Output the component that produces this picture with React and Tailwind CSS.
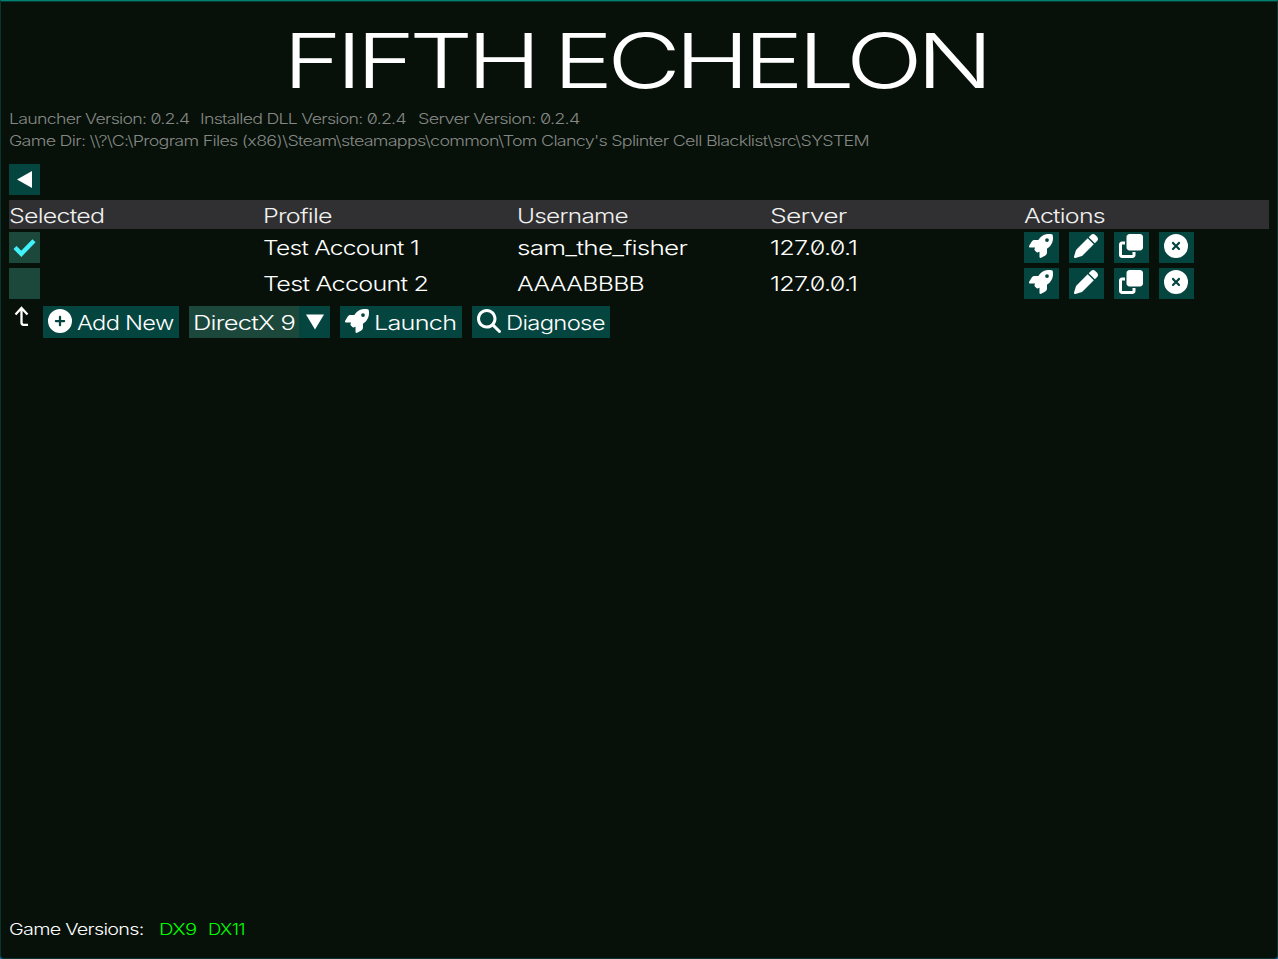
import { useLayoutEffect, useRef, useState } from "react";
import {
  FaRocket,
  FaPen,
  FaClone,
  FaCircleXmark,
  FaCirclePlus,
  FaMagnifyingGlass,
} from "react-icons/fa6";

function Wide({ w, className = "", children }) {
  const ref = useRef(null);
  const [scale, setScale] = useState(1);
  useLayoutEffect(() => {
    const fit = () => {
      if (ref.current) setScale(w / ref.current.offsetWidth);
    };
    fit();
    document.fonts?.ready.then(fit);
  }, [w]);
  return (
    <span className={`block shrink-0 text-left whitespace-pre ${className}`} style={{ width: w }}>
      <span
        ref={ref}
        className="inline-block origin-left"
        style={{ transform: `scaleX(${scale})` }}
      >
        {children}
      </span>
    </span>
  );
}

const columns = [
  ["Selected", 95],
  ["Profile", 69],
  ["Username", 111],
  ["Server", 77],
  ["Actions", 81],
];

const accounts = [
  { selected: true, name: ["Test Account 1", 156], user: ["sam_the_fisher", 170], server: ["127.0.0.1", 87] },
  { selected: false, name: ["Test Account 2", 165], user: ["AAAABBBB", 127], server: ["127.0.0.1", 87] },
];

const actions = [FaRocket, FaPen, FaClone, FaCircleXmark];

function Row({ account }) {
  return (
    <div className="grid h-[31px] grid-cols-[254px_254px_253px_254px_1fr]">
      <button className="flex size-[31px] items-center justify-center bg-[#1c483c]">
        {account.selected && (
          <svg viewBox="0 0 31 31" className="size-[31px]" fill="none" stroke="#42f2fa" strokeWidth="4.4">
            <path d="M6 15.5 L12.3 21.8 L25 8.7" />
          </svg>
        )}
      </button>
      <Wide w={account.name[1]} className="pt-px">{account.name[0]}</Wide>
      <Wide w={account.user[1]} className="pt-px">{account.user[0]}</Wide>
      <Wide w={account.server[1]} className="pt-px">{account.server[0]}</Wide>
      <div className="flex gap-2.5">
        {actions.map((Icon, i) => (
          <button key={i} className="flex h-[31px] w-[35px] items-start bg-[#05453f] pt-0.5 pl-[5px]">
            <Icon size={24} />
          </button>
        ))}
      </div>
    </div>
  );
}

function IconButton({ icon: Icon, label, w, className }) {
  return (
    <button className={`flex h-8 items-start gap-[5px] bg-[#05453f] pl-[5px] ${className}`}>
      <Icon size={24} className="mt-[3px] shrink-0" />
      <Wide w={w} className="pt-0.5">{label}</Wide>
    </button>
  );
}

export default function App() {
  return (
    <div className="h-[959px] w-[1278px] bg-[#0b6cb4]">
      <div className="flex h-full flex-col rounded-b-[4px] border border-[#08352d] border-t-[#008270] bg-[#071109] px-2 font-['Inter',sans-serif] text-[20px] leading-[30px] font-light tracking-[-0.03em] text-white shadow-[inset_0_1px_0_#043a31] [font-feature-settings:'zero']">
        <h1 className="mt-[14px] flex h-[90px] gap-[18px] pl-[274px] text-[76px] leading-[90px] font-light tracking-[-0.06em]">
          <Wide w={252}>FIFTH</Wide>
          <Wide w={434}>ECHELON</Wide>
        </h1>
        <div className="mt-[3px] flex h-[21px] gap-2.5 text-[14.5px] leading-[21px] text-[#858785]">
          <Wide w={180} className="mr-px">Launcher Version: 0.2.4</Wide>
          <Wide w={206} className="mr-0.5">Installed DLL Version: 0.2.4</Wide>
          <Wide w={161}>Server Version: 0.2.4</Wide>
        </div>
        <Wide w={860} className="h-[22px] pt-px text-[14.5px] leading-[22px] text-[#858785]">
          {"Game Dir: \\\\?\\C:\\Program Files (x86)\\Steam\\steamapps\\common\\Tom Clancy's Splinter Cell Blacklist\\src\\SYSTEM"}
        </Wide>
        <button className="mt-[13px] flex size-[31px] shrink-0 items-center justify-center bg-[#05453f]">
          <svg viewBox="0 0 31 31" className="size-[31px]" fill="white">
            <path d="M8 15.5 L23 7 V24 Z" />
          </svg>
        </button>
        <div className="mt-[5px] grid h-[29px] w-[1260px] shrink-0 grid-cols-[254px_254px_253px_254px_1fr] bg-[#303032] text-[#f0f0f0]">
          {columns.map(([label, w]) => (
            <Wide key={label} w={w} className="pt-px">{label}</Wide>
          ))}
        </div>
        <div className="mt-[3px] flex flex-col gap-[5px]">
          {accounts.map((account) => (
            <Row key={account.name[0]} account={account} />
          ))}
        </div>
        <div className="mt-[7px] flex h-8 shrink-0">
          <svg viewBox="0 0 34 32" className="h-8 w-[34px]" fill="none" stroke="white" strokeWidth="2.3">
            <path d="M6.5 8.5 L12.5 2 L18.5 8.5 M12.5 2 V16.5 Q12.5 18.8 14.5 18.8 H19" />
          </svg>
          <IconButton icon={FaCirclePlus} label="Add New" w={97} className="mr-2.5 w-[136px]" />
          <button className="mr-2.5 flex h-8 w-[141px] bg-[#1c483c] pl-1">
            <Wide w={102} className="pt-0.5">DirectX 9</Wide>
            <span className="ml-1 flex h-8 w-[31px] bg-[#05453f]">
              <svg viewBox="0 0 31 32" className="h-8 w-[31px]" fill="white">
                <path d="M7 8.5 H25 L16 23.5 Z" />
              </svg>
            </span>
          </button>
          <IconButton icon={FaRocket} label="Launch" w={82} className="mr-2.5 w-[122px]" />
          <IconButton icon={FaMagnifyingGlass} label="Diagnose" w={99} className="w-[138px]" />
        </div>
        <div className="mt-auto mb-[17px] flex h-6 text-[16px] leading-6">
          <Wide w={135} className="mr-[15px]">Game Versions:</Wide>
          <Wide w={38} className="mr-[11px] text-[#00ff00]">DX9</Wide>
          <Wide w={37} className="text-[#00ff00]">DX11</Wide>
        </div>
      </div>
    </div>
  );
}
